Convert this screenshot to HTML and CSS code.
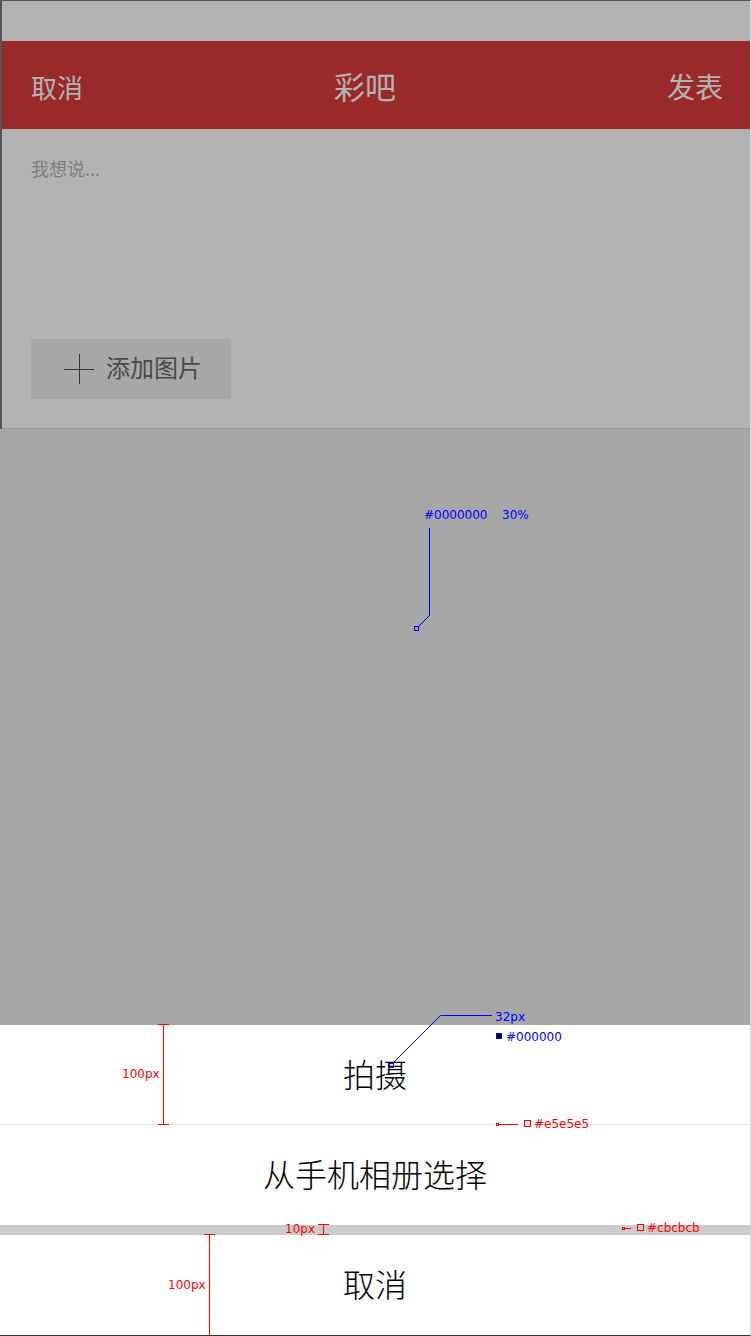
FILE: index.html
```html
<!DOCTYPE html>
<html lang="zh-CN">
<head>
<meta charset="utf-8">
<title>彩吧</title>
<link rel="stylesheet" href="styles.css">
</head>
<body>
<div class="screen">
  <div class="app">
    <div class="statusbar"></div>
    <header class="navbar">
      <span class="nav-left">取消</span>
      <h1 class="nav-title">彩吧</h1>
      <span class="nav-right">发表</span>
    </header>
    <section class="compose">
      <p class="placeholder">我想说...</p>
      <button class="add-photo" type="button"><span class="plus"></span><span class="add-label">添加图片</span></button>
    </section>
  </div>

  <div class="mask"></div>

  <div class="sheet">
    <div class="sheet-group">
      <div class="sheet-item sheet-item-divided">拍摄</div>
      <div class="sheet-item">从手机相册选择</div>
    </div>
    <div class="sheet-item">取消</div>
  </div>

  <svg class="annotations" width="751" height="1336" viewBox="0 0 751 1336">
    <g class="ann-blue">
      <text x="424" y="519">#0000000</text>
      <text x="502" y="519">30%</text>
      <polyline points="429.5,528 429.5,615.5 418.5,626.5" />
      <rect x="414.5" y="626.5" width="4" height="4" />

      <polyline points="492,1015.5 440.5,1015.5 393,1063" />
      <rect x="389.5" y="1063.5" width="4" height="4" />
      <text x="495" y="1020.5">32px</text>
      <rect class="swatch-black" x="496.5" y="1033.5" width="5" height="5" />
      <text x="506" y="1041">#000000</text>
    </g>
    <g class="ann-red">
      <text x="122" y="1078">100px</text>
      <line x1="163.5" y1="1024" x2="163.5" y2="1125" />
      <line x1="158" y1="1024.5" x2="169" y2="1024.5" />
      <line x1="158" y1="1124.5" x2="169" y2="1124.5" />

      <rect x="496.5" y="1123.5" width="2" height="2" />
      <line x1="498" y1="1124.5" x2="518" y2="1124.5" />
      <rect class="swatch-e5" x="524.5" y="1120.5" width="6" height="6" />
      <text x="534" y="1128">#e5e5e5</text>

      <text x="285" y="1232.5">10px</text>
      <line x1="323.5" y1="1224" x2="323.5" y2="1235" />
      <line x1="318" y1="1224.5" x2="329" y2="1224.5" />
      <line x1="318" y1="1234.5" x2="329" y2="1234.5" />

      <rect x="622.5" y="1227.5" width="2" height="2" />
      <line x1="625" y1="1228.5" x2="631" y2="1228.5" />
      <rect class="swatch-cb" x="637.5" y="1224.5" width="6" height="6" />
      <text x="647" y="1232">#cbcbcb</text>

      <text x="168" y="1289">100px</text>
      <line x1="209.5" y1="1234" x2="209.5" y2="1336" />
      <line x1="204" y1="1234.5" x2="215" y2="1234.5" />
    </g>
  </svg>
</div>
</body>
</html>
```

FILE: styles.css
```css
html, body {
  margin: 0;
  padding: 0;
}

body {
  width: 751px;
  height: 1336px;
  overflow: hidden;
  background: #ffffff;
  font-family: "Noto Sans CJK SC", "Noto Sans", sans-serif;
}

.screen {
  position: relative;
  width: 751px;
  height: 1336px;
  box-sizing: border-box;
  border-top: 1px solid #555555;
  border-right: 1px solid #d8d8d8;
  border-bottom: 1px solid #333333;
  background: #efefef;
  overflow: hidden;
}

/* ---------- underlying page ---------- */
.app {
  border-left: 2px solid #7a7a7a;
  background: #ffffff;
}

.statusbar {
  height: 40px;
  background: #ffffff;
}

.navbar {
  height: 88px;
  background: #dd3c3c;
  color: #ffffff;
  display: flex;
  align-items: center;
  padding: 0 27px 0 29px;
}

.nav-left {
  font-size: 26px;
  line-height: 1;
  padding-top: 4px;
}

.nav-title {
  flex: 1;
  margin: 0;
  padding-right: 20px;
  text-align: center;
  font-size: 31px;
  font-weight: normal;
  line-height: 1;
}

.nav-right {
  font-size: 28px;
  line-height: 1;
  padding-top: 1px;
}

.compose {
  height: 300px;
  box-sizing: border-box;
  border-bottom: 1px solid #e0e0e0;
  padding: 27px 0 29px 29px;
  display: flex;
  flex-direction: column;
  justify-content: space-between;
  align-items: flex-start;
}

.placeholder {
  margin: 0;
  font-size: 18px;
  line-height: 24px;
  color: #b5b5b5;
}

.add-photo {
  width: 200px;
  height: 60px;
  margin: 0;
  border: 0;
  background: #f0f0f0;
  display: flex;
  align-items: center;
  gap: 12px;
  padding: 0 0 0 33px;
  font-family: inherit;
  font-size: 24px;
  color: #6a6a6a;
}

.plus {
  width: 30px;
  height: 30px;
  flex: none;
  background:
    linear-gradient(#4a4a4a, #4a4a4a) center / 30px 1px no-repeat,
    linear-gradient(#4a4a4a, #4a4a4a) center / 1px 30px no-repeat;
}

.add-label {
  line-height: 1;
  padding-bottom: 5px;
}

/* ---------- dimmer ---------- */
.mask {
  position: absolute;
  inset: 0;
  background: rgba(0, 0, 0, 0.3);
}

/* ---------- action sheet ---------- */
.sheet {
  position: absolute;
  left: 0;
  right: 0;
  bottom: 0;
  background: #cbcbcb;
  display: flex;
  flex-direction: column;
  gap: 10px;
}

.sheet-group {
  display: flex;
  flex-direction: column;
}

.sheet-item {
  height: 100px;
  box-sizing: border-box;
  padding-bottom: 4px;
  background: #ffffff;
  color: #000000;
  font-size: 32px;
  font-weight: 300;
  display: flex;
  align-items: center;
  justify-content: center;
}

.sheet-item-divided {
  border-bottom: 1px solid #e5e5e5;
}

/* ---------- design annotations ---------- */
.annotations {
  position: absolute;
  top: -1px;
  left: 0;
  pointer-events: none;
  font-family: "DejaVu Sans", Verdana, sans-serif;
  font-size: 12px;
}

.ann-blue text {
  fill: #0000ff;
}

.ann-blue polyline,
.ann-blue rect {
  fill: none;
  stroke: #0000ff;
  stroke-width: 1;
}

.ann-blue .swatch-black {
  fill: #000000;
}

.ann-red text {
  fill: #ff0000;
}

.ann-red line,
.ann-red rect {
  fill: none;
  stroke: #ff0000;
  stroke-width: 1;
}

.ann-red .swatch-e5 {
  fill: #e5e5e5;
}

.ann-red .swatch-cb {
  fill: #cbcbcb;
}
```
